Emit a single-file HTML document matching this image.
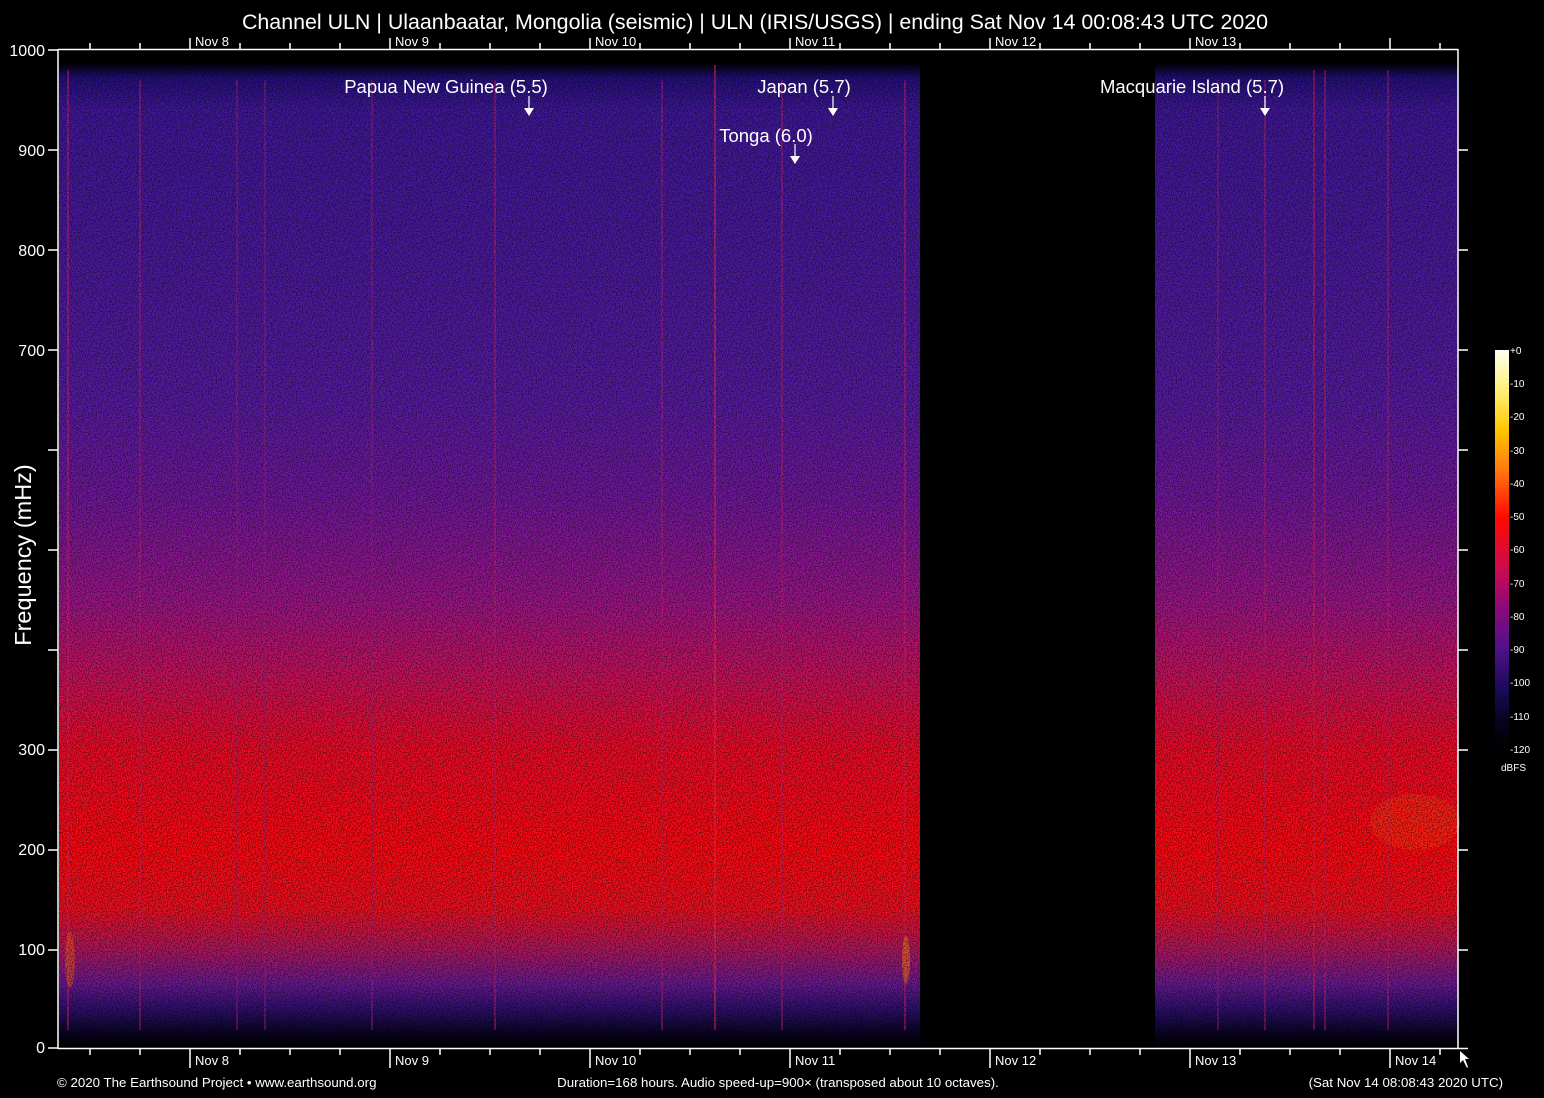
<!DOCTYPE html>
<html><head><meta charset="utf-8"><style>
html,body{margin:0;padding:0;background:#000;width:1544px;height:1098px;overflow:hidden}
svg{display:block}
text{font-family:"Liberation Sans",Arial,sans-serif;fill:#fff}
</style></head><body>
<svg width="1544" height="1098" viewBox="0 0 1544 1098" xmlns="http://www.w3.org/2000/svg">
<defs>
<linearGradient id="sg" x1="0" y1="50" x2="0" y2="1048" gradientUnits="userSpaceOnUse">
<stop offset="0" stop-color="#000"/>
<stop offset="0.013" stop-color="#000"/>
<stop offset="0.028" stop-color="#24107a"/>
<stop offset="0.06" stop-color="#401898"/>
<stop offset="0.35" stop-color="#561ca0"/>
<stop offset="0.45" stop-color="#70189a"/>
<stop offset="0.55" stop-color="#9a1688"/>
<stop offset="0.63" stop-color="#c8125a"/>
<stop offset="0.70" stop-color="#ec0c28"/>
<stop offset="0.80" stop-color="#ff0a12"/>
<stop offset="0.86" stop-color="#ee1020"/>
<stop offset="0.90" stop-color="#b0185a"/>
<stop offset="0.935" stop-color="#6a1a90"/>
<stop offset="0.96" stop-color="#301070"/>
<stop offset="0.985" stop-color="#0a0424"/>
<stop offset="1" stop-color="#000"/>
</linearGradient>
<linearGradient id="cb" x1="0" y1="350" x2="0" y2="748" gradientUnits="userSpaceOnUse">
<stop offset="0" stop-color="#fffff0"/>
<stop offset="0.1" stop-color="#fff07a"/>
<stop offset="0.2" stop-color="#ffc800"/>
<stop offset="0.3" stop-color="#ff7a10"/>
<stop offset="0.42" stop-color="#ff0a00"/>
<stop offset="0.55" stop-color="#cc0a50"/>
<stop offset="0.65" stop-color="#8a0a7a"/>
<stop offset="0.75" stop-color="#50108a"/>
<stop offset="0.85" stop-color="#1c0a5a"/>
<stop offset="0.93" stop-color="#050520"/>
<stop offset="1" stop-color="#000"/>
</linearGradient>
<filter id="nz" x="0" y="0" width="100%" height="100%">
<feTurbulence type="fractalNoise" baseFrequency="0.8" numOctaves="1" seed="3"/>
<feColorMatrix type="matrix" values="0 0 0 0 0  0 0 0 0 0  0 0 0 0 0  4 0 0 0 -1.7"/>
</filter>
</defs>

<rect x="59" y="50" width="861" height="998" fill="url(#sg)"/>
<rect x="1155" y="50" width="303" height="998" fill="url(#sg)"/>
<g stroke-width="2" opacity="0.5">
<line x1="68" y1="70" x2="68" y2="1030" stroke="#e0206a"/>
<line x1="140" y1="80" x2="140" y2="1030" stroke="#c02070"/>
<line x1="237" y1="80" x2="237" y2="1030" stroke="#a02080"/>
<line x1="265" y1="80" x2="265" y2="1030" stroke="#a02080"/>
<line x1="372" y1="80" x2="372" y2="1030" stroke="#a02080"/>
<line x1="495" y1="80" x2="495" y2="1030" stroke="#c02070"/>
<line x1="662" y1="80" x2="662" y2="1030" stroke="#c02070"/>
<line x1="715" y1="65" x2="715" y2="1030" stroke="#ff3050"/>
<line x1="782" y1="80" x2="782" y2="1030" stroke="#c02070"/>
<line x1="905" y1="80" x2="905" y2="1030" stroke="#e02060"/>
<line x1="1218" y1="80" x2="1218" y2="1030" stroke="#a02080"/>
<line x1="1265" y1="80" x2="1265" y2="1030" stroke="#c02070"/>
<line x1="1314" y1="70" x2="1314" y2="1030" stroke="#e02050"/>
<line x1="1325" y1="70" x2="1325" y2="1030" stroke="#c02070"/>
<line x1="1388" y1="70" x2="1388" y2="1030" stroke="#c02070"/>
</g>
<ellipse cx="1415" cy="822" rx="45" ry="28" fill="#ff5010" opacity="0.3"/>
<ellipse cx="70" cy="960" rx="5" ry="28" fill="#ff6010" opacity="0.45"/>
<ellipse cx="906" cy="960" rx="4" ry="24" fill="#ff8010" opacity="0.5"/>
<rect x="59" y="50" width="861" height="998" filter="url(#nz)" opacity="0.5"/>
<rect x="1155" y="50" width="303" height="998" filter="url(#nz)" opacity="0.5"/>

<g stroke="#fff" stroke-width="1.5" fill="none">
<line x1="58" y1="49" x2="58" y2="1049"/>
<line x1="58" y1="49.5" x2="1458" y2="49.5"/>
<line x1="58" y1="1048.5" x2="1468" y2="1048.5"/>
<line x1="1458" y1="49" x2="1458" y2="1049"/>
<path d="M48 50H58M48 150H58M48 250H58M48 350H58M48 450H58M48 550H58M48 650H58M48 750H58M48 850H58M48 950H58M48 1048H58"/>
<path d="M1458 150H1468M1458 250H1468M1458 350H1468M1458 450H1468M1458 550H1468M1458 650H1468M1458 750H1468M1458 850H1468M1458 950H1468"/>
<path d="M90 49V43M140 49V43M240 49V43M290 49V43M340 49V43M440 49V43M490 49V43M540 49V43M640 49V43M690 49V43M740 49V43M840 49V43M890 49V43M940 49V43M1040 49V43M1090 49V43M1140 49V43M1240 49V43M1290 49V43M1340 49V43M1440 49V43"/>
<path d="M190 49V38M390 49V38M590 49V38M790 49V38M990 49V38M1190 49V38M1390 49V38"/>
<path d="M90 1048V1055M140 1048V1055M240 1048V1055M290 1048V1055M340 1048V1055M440 1048V1055M490 1048V1055M540 1048V1055M640 1048V1055M690 1048V1055M740 1048V1055M840 1048V1055M890 1048V1055M940 1048V1055M1040 1048V1055M1090 1048V1055M1140 1048V1055M1240 1048V1055M1290 1048V1055M1340 1048V1055M1440 1048V1055"/>
<path d="M190 1048V1068M390 1048V1068M590 1048V1068M790 1048V1068M990 1048V1068M1190 1048V1068M1390 1048V1068"/>
</g>
<path d="M1460 1051L1460 1063L1463 1060L1467 1068L1468 1067L1465 1059L1469 1059Z" fill="#fff"/>

<text x="755" y="29" font-size="21.4" text-anchor="middle">Channel ULN | Ulaanbaatar, Mongolia (seismic) | ULN (IRIS/USGS) | ending Sat Nov 14 00:08:43 UTC 2020</text>

<g font-size="16" text-anchor="end">
<text x="45" y="56">1000</text>
<text x="45" y="156">900</text>
<text x="45" y="256">800</text>
<text x="45" y="356">700</text>
<text x="45" y="755">300</text>
<text x="45" y="855">200</text>
<text x="45" y="955">100</text>
<text x="45" y="1053">0</text>
</g>
<text transform="translate(31,555) rotate(-90)" font-size="23.5" text-anchor="middle">Frequency (mHz)</text>

<g font-size="13">
<text x="195" y="46">Nov  8</text><text x="395" y="46">Nov  9</text><text x="595" y="46">Nov 10</text>
<text x="795" y="46">Nov 11</text><text x="995" y="46">Nov 12</text><text x="1195" y="46">Nov 13</text>
<text x="195" y="1065">Nov  8</text><text x="395" y="1065">Nov  9</text><text x="595" y="1065">Nov 10</text>
<text x="795" y="1065">Nov 11</text><text x="995" y="1065">Nov 12</text><text x="1195" y="1065">Nov 13</text><text x="1395" y="1065">Nov 14</text>
</g>

<g font-size="18.5" text-anchor="middle">
<text x="446" y="93">Papua New Guinea (5.5)</text>
<text x="804" y="93">Japan (5.7)</text>
<text x="766" y="142">Tonga (6.0)</text>
<text x="1192" y="93">Macquarie Island (5.7)</text>
</g>
<g stroke="#fff" stroke-width="1.2"><path d="M529 96V110M833 96V110M795 144V158M1265 96V110"/></g>
<g fill="#fff"><path d="M524 108H534L529 116Z"/><path d="M828 108H838L833 116Z"/><path d="M790 156H800L795 164Z"/><path d="M1260 108H1270L1265 116Z"/></g>

<rect x="1495" y="350" width="14" height="398" fill="url(#cb)"/>
<g font-size="10" fill="#ddd">
<text x="1510" y="354">+0</text><text x="1510" y="387">-10</text><text x="1510" y="420">-20</text>
<text x="1510" y="454">-30</text><text x="1510" y="487">-40</text><text x="1510" y="520">-50</text>
<text x="1510" y="553">-60</text><text x="1510" y="587">-70</text><text x="1510" y="620">-80</text>
<text x="1510" y="653">-90</text><text x="1510" y="686">-100</text><text x="1510" y="720">-110</text>
<text x="1510" y="753">-120</text><text x="1501" y="771">dBFS</text>
</g>

<g font-size="13.3">
<text x="57" y="1087">© 2020 The Earthsound Project • www.earthsound.org</text>
<text x="778" y="1087" text-anchor="middle">Duration=168 hours. Audio speed-up=900× (transposed about 10 octaves).</text>
<text x="1503" y="1087" text-anchor="end">(Sat Nov 14 08:08:43 2020 UTC)</text>
</g>
</svg>
</body></html>
